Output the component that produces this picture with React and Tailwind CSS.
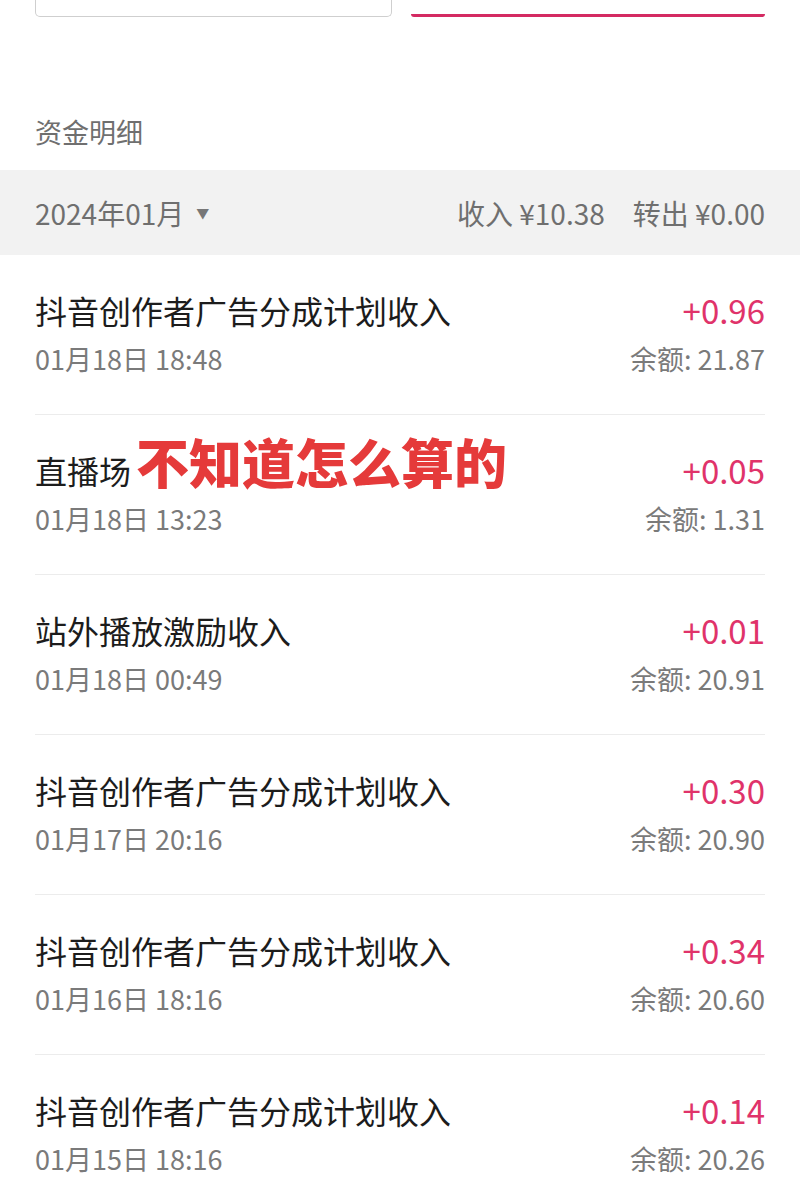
const rows = [
  { title: "抖音创作者广告分成计划收入", time: "01月18日 18:48", amount: "+0.96", balance: "21.87" },
  { title: "直播场", time: "01月18日 13:23", amount: "+0.05", balance: "1.31", stamp: true },
  { title: "站外播放激励收入", time: "01月18日 00:49", amount: "+0.01", balance: "20.91" },
  { title: "抖音创作者广告分成计划收入", time: "01月17日 20:16", amount: "+0.30", balance: "20.90" },
  { title: "抖音创作者广告分成计划收入", time: "01月16日 18:16", amount: "+0.34", balance: "20.60" },
  { title: "抖音创作者广告分成计划收入", time: "01月15日 18:16", amount: "+0.14", balance: "20.26" },
];

const font = { fontFamily: '"Noto Sans CJK SC", "Noto Sans", sans-serif' };

const App = () => {
  return (
    <div className="w-[800px] h-[1187px] overflow-hidden bg-white" style={font}>
      {/* cut-off buttons at the top */}
      <div className="flex gap-[19px] px-[35px] h-[17px]">
        <div className="flex-1 border border-t-0 border-[#cfcfcf] rounded-b-[5px]" />
        <div className="flex-1 border-b-[3px] border-[#d42a62] rounded-b-[3px]" />
      </div>

      {/* section title */}
      <div className="h-[153px] pt-[97px] px-[35px]">
        <p className="text-[27px] leading-[36px] text-[#6f6f6f]">资金明细</p>
      </div>

      {/* month bar */}
      <div className="h-[85px] bg-[#f2f2f2] flex items-center justify-between px-[35px] text-[28px] text-[#6f6f6f]">
        <div className="flex items-center gap-[12px]">
          <span>2024年01月</span>
          <span className="text-[13px] text-[#777]">▼</span>
        </div>
        <div className="flex gap-[28px]">
          <span>收入 ¥10.38</span>
          <span>转出 ¥0.00</span>
        </div>
      </div>

      {/* list */}
      <div>
        {rows.map((row, i) => (
          <div key={i} className="relative h-[160px] px-[35px]">
            <div className="h-full flex justify-between border-b border-[#ececec] pt-[34px]">
              <div className="flex flex-col">
                <span className="text-[32px] leading-[42px] text-[#1c1c1c]">{row.title}</span>
                <span className="mt-[11px] text-[27px] leading-[34px] text-[#7a7a7a]">{row.time}</span>
              </div>
              <div className="flex flex-col items-end">
                <span className="text-[33px] leading-[42px] text-[#e0336a]">{row.amount}</span>
                <span className="mt-[11px] text-[27px] leading-[34px] text-[#7a7a7a]">余额: {row.balance}</span>
              </div>
            </div>
            {row.stamp && (
              <span className="absolute left-[136px] top-[16px] text-[53px] leading-[60px] font-black text-[#e53a3a]">
                不知道怎么算的
              </span>
            )}
          </div>
        ))}
      </div>
    </div>
  );
};

export default App;
